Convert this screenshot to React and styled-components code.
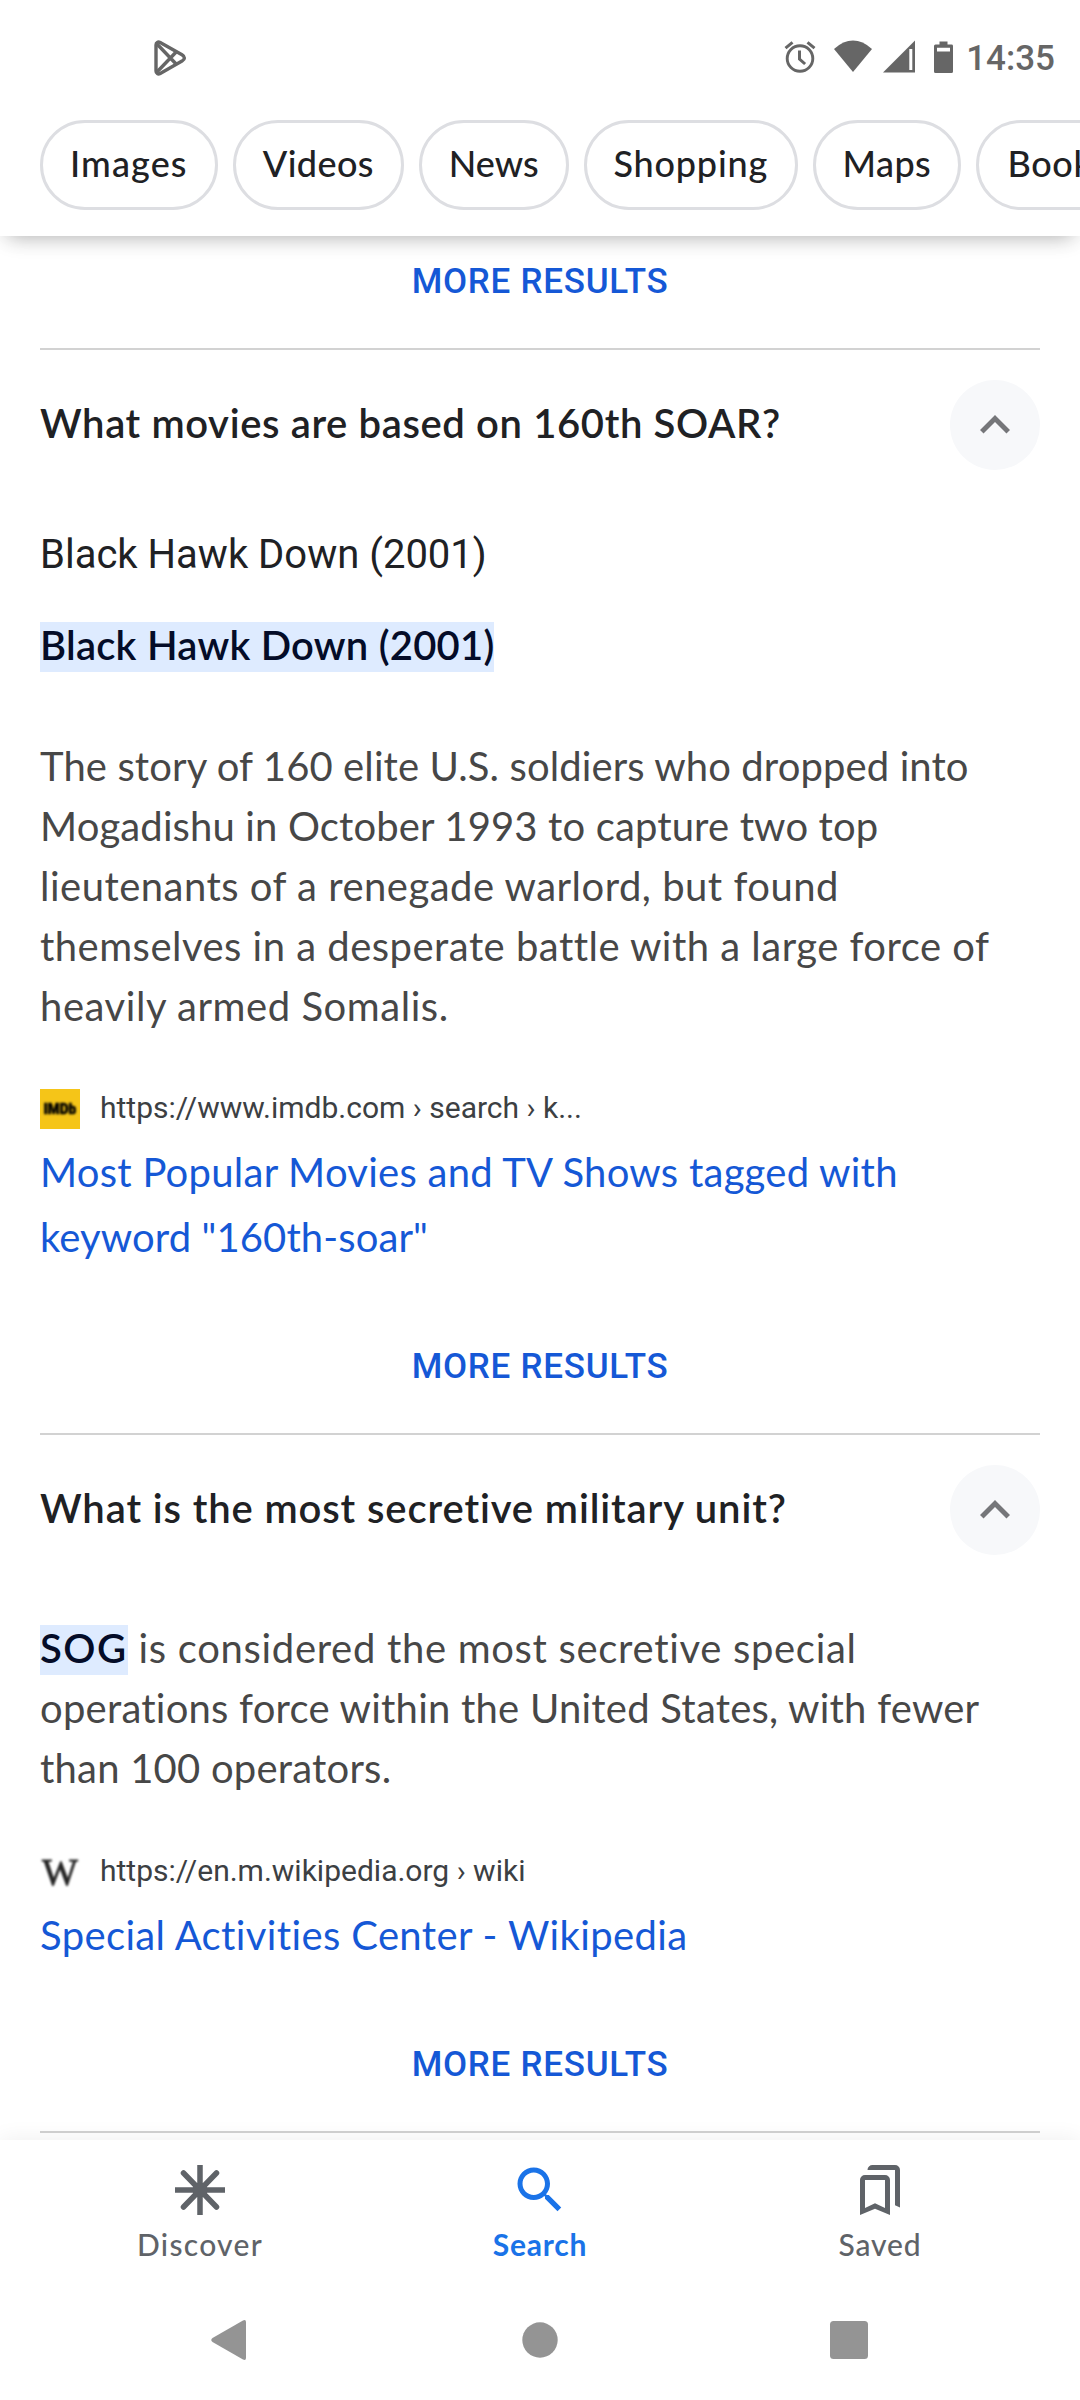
import React from "react";
import styled, { createGlobalStyle } from "styled-components";

const sans = '"Lato", "Liberation Sans", sans-serif';
const roboto = '"Roboto", "Liberation Sans", sans-serif';
const link = "#1558d6";

const GlobalStyle = createGlobalStyle`
  * { box-sizing: border-box; }
  body { margin: 0; background: #fff; }
`;

const Screen = styled.div`
  display: flex;
  flex-direction: column;
  width: 1080px;
  height: 2400px;
  overflow: hidden;
  background: #fff;
  color: #202124;
  font-family: ${sans};
`;

const Header = styled.header`
  position: relative;
  z-index: 1;
  flex: none;
  height: 236px;
  background: #fff;
  box-shadow: 0 8px 20px -8px rgba(0, 0, 0, 0.32), 0 4px 24px rgba(0, 0, 0, 0.03);
`;

const StatusBar = styled.div`
  display: flex;
  align-items: center;
  height: 116px;
  padding: 0 25px 0 152px;
  color: #666;
`;

const StatusIcon = styled.svg`
  flex: none;
  display: block;
  width: ${(p) => p.$width}px;
  height: 36px;
  margin-left: ${(p) => p.$gap || 0}px;
`;

const Spacer = styled.div`
  flex: 1;
`;

const Clock = styled.span`
  margin-left: 13.5px;
  padding-top: 2px;
  font: 500 35px/40px ${roboto};
`;

const Chips = styled.nav`
  display: flex;
  gap: 15.4px;
  padding: 4px 0 0 40px;
  overflow: hidden;
`;

const Chip = styled.div`
  flex: none;
  display: flex;
  justify-content: center;
  width: ${(p) => p.$width}px;
  height: 90px;
  border: 3px solid #dddee2;
  border-radius: 45px;
  font-size: 36px;
  font-weight: 500;
  line-height: 80px;
  letter-spacing: ${(p) => p.$track}px;
`;

const Content = styled.main`
  flex: 1;
  min-height: 0;
  overflow: hidden;
  padding: 0 40px;
`;

const MoreResults = styled.div`
  height: 90px;
  margin-bottom: 22px;
  text-align: center;
  color: ${link};
  font: 500 35px/92px ${roboto};
  letter-spacing: 0.72px;
`;

const Question = styled.section`
  padding-top: 30px;
  border-top: 2px solid #d2d2d2;
`;

const QuestionHead = styled.div`
  display: flex;
  justify-content: space-between;
  align-items: center;
  height: 90px;
`;

const Title = styled.h2`
  margin: 0;
  padding-bottom: 4px;
  font-size: 40px;
  font-weight: 600;
  line-height: 60px;
  letter-spacing: ${(p) => p.$track}px;
`;

const Toggle = styled.div`
  display: grid;
  place-items: center;
  width: 90px;
  height: 90px;
  border-radius: 50%;
  background: #f7f8fa;
  color: #757679;
`;

const Icon = styled.svg`
  display: block;
  width: 60px;
  height: 60px;
  fill: currentColor;
`;

const Subject = styled.div`
  margin-top: 55px;
  font: 400 40px/60px ${roboto};
`;

const Answer = styled.div`
  margin-top: 30px;
  font-size: 40px;
  line-height: 60px;
`;

const Mark = styled.span`
  padding-bottom: 3px;
  background: linear-gradient(#deebff, #deebff) 0 1px no-repeat;
  color: #040c28;
  font-weight: 600;
  letter-spacing: ${(p) => p.$track}px;
`;

const Snippet = styled.p`
  margin: ${(p) => p.$gap}px 0 0;
  color: #474747;
  font-size: 40px;
  line-height: 60px;
`;

const Line = styled.span`
  display: block;
  white-space: pre;
  letter-spacing: ${(p) => p.$track}px;
`;

const Source = styled.div`
  display: flex;
  align-items: center;
  gap: 20px;
  height: 40px;
  margin-top: ${(p) => p.$gap}px;
`;

const Favicon = styled.div`
  display: grid;
  place-items: center;
  width: 40px;
  height: 40px;
`;

const ImdbIcon = styled(Favicon)`
  background: #f5c518;
  color: #000;
`;

const ImdbText = styled.span`
  font: 900 15px/20px ${roboto};
  transform: scaleX(0.9);
  -webkit-text-stroke: 0.7px #000;
  filter: blur(0.9px);
`;

const WikiText = styled.span`
  color: #222;
  font: 400 38px/40px "Liberation Serif", serif;
  -webkit-text-stroke: 0.9px #333;
  filter: blur(0.8px);
`;

const Url = styled.span`
  padding-bottom: 3px;
  color: #3c4043;
  font: 400 30px/36px ${roboto};
`;

const ResultLink = styled.div`
  margin: 11px 0 51px;
  color: ${link};
  font-size: 40px;
  line-height: 65px;
`;

const BottomBar = styled.footer`
  position: relative;
  z-index: 1;
  flex: none;
  height: 260px;
  background: #fff;
  box-shadow: 0 0 22px rgba(0, 0, 0, 0.07);
`;

const Tabs = styled.div`
  display: grid;
  grid-template-columns: repeat(3, 340px);
  justify-content: center;
  height: 140px;
  padding-top: 20px;
`;

const Tab = styled.div`
  display: flex;
  flex-direction: column;
  align-items: center;
  color: ${(p) => (p.$active ? "#1a73e8" : "#5f6368")};
  font-size: 30px;
  font-weight: ${(p) => (p.$active ? 700 : 500)};
  line-height: 40px;
  letter-spacing: ${(p) => p.$track}px;
`;

const TabLabel = styled.span`
  margin-top: 4px;
`;

const SystemNav = styled.div`
  display: grid;
  grid-template-columns: repeat(3, 309px);
  justify-content: center;
  justify-items: center;
  align-items: center;
  height: 120px;
  color: #949494;
`;

const chips = [
  ["Images", 177.6, 1.1],
  ["Videos", 170.6, 0.4],
  ["News", 149.6, 0.1],
  ["Shopping", 213.6, 0.8],
  ["Maps", 147.8, 0.4],
  ["Books", 164, 0.6],
];

const ExpandToggle = () => (
  <Toggle>
    <Icon viewBox="0 0 24 24">
      <path d="M12 8l-6 6 1.41 1.41L12 10.83l4.59 4.58L18 14z" />
    </Icon>
  </Toggle>
);

export default function App() {
  return (
    <Screen>
      <GlobalStyle />
      <Header>
        <StatusBar>
          <StatusIcon $width={36} viewBox="152 40.5 36 36" fill="none" stroke="currentColor" strokeWidth="3.4">
            <path d="M156 45.5v26c0 2.6 2 3.6 4.2 2.4L182 61.6c3.2-1.9 3.2-4.4 0-6.3L160.2 43.100c-2.2-1.2-4.2-.2-4.2 2.4z" />
            <path d="M157 44.5l19.6 20.5M157 72.5l19.6-20.5" />
          </StatusIcon>
          <Spacer />
          <StatusIcon $width={32} viewBox="784.5 40.5 32 36" fill="none" stroke="currentColor">
            <circle cx="800.5" cy="59" r="12.8" strokeWidth="2.9" />
            <path d="M786 48.6l7-5.8M815 48.6l-7-5.8M800 51v8.5l5.6 5" strokeWidth="3" />
          </StatusIcon>
          <StatusIcon $width={38} $gap={17.5} viewBox="834 40.5 38 36" fill="currentColor">
            <path d="M834 49.5Q853 32.7 872 49.5L853 72.5Z" />
          </StatusIcon>
          <StatusIcon $width={32} $gap={11} viewBox="883 40.5 32 36" fill="currentColor" fillRule="evenodd">
            <path d="M883 73L915 41V73ZM909.3 49.5V70.5H912.3V49.5Z" />
          </StatusIcon>
          <StatusIcon $width={19} $gap={19} viewBox="934 40.5 19 36" fill="currentColor" fillRule="evenodd">
            <path d="M939.5 42h8v3h4a1.5 1.5 0 0 1 1.5 1.5v25.5a1.5 1.5 0 0 1-1.5 1.5h-16a1.5 1.5 0 0 1-1.5-1.5v-25.5a1.5 1.5 0 0 1 1.5-1.5h4zM937 48.3v3.7h13v-3.7z" />
          </StatusIcon>
          <Clock>14:35</Clock>
        </StatusBar>
        <Chips>
          {chips.map(([label, width, track]) => (
            <Chip key={label} $width={width} $track={track}>
              {label}
            </Chip>
          ))}
        </Chips>
      </Header>

      <Content>
        <MoreResults>MORE RESULTS</MoreResults>

        <Question>
          <QuestionHead>
            <Title $track={0.62}>What movies are based on 160th SOAR?</Title>
            <ExpandToggle />
          </QuestionHead>
          <Subject>Black Hawk Down (2001)</Subject>
          <Answer>
            <Mark $track={0.22}>Black Hawk Down (2001)</Mark>
          </Answer>
          <Snippet $gap={61}>
            <Line $track={0.11}>The story of 160 elite U.S. soldiers who dropped into</Line>
            <Line $track={0.14}>Mogadishu in October 1993 to capture two top</Line>
            <Line $track={0.49}>lieutenants of a renegade warlord, but found</Line>
            <Line $track={0.48}>themselves in a desperate battle with a large force of</Line>
            <Line $track={0.56}>heavily armed Somalis.</Line>
          </Snippet>
          <Source $gap={53}>
            <ImdbIcon>
              <ImdbText>IMDb</ImdbText>
            </ImdbIcon>
            <Url>https://www.imdb.com › search › k...</Url>
          </Source>
          <ResultLink>
            <Line $track={0.26}>Most Popular Movies and TV Shows tagged with</Line>
            <Line $track={0.11}>keyword "160th-soar"</Line>
          </ResultLink>
          <MoreResults>MORE RESULTS</MoreResults>
        </Question>

        <Question>
          <QuestionHead>
            <Title $track={0.88}>What is the most secretive military unit?</Title>
            <ExpandToggle />
          </QuestionHead>
          <Snippet $gap={63}>
            <Line $track={0.68}>
              <Mark $track={1.5}>SOG</Mark> is considered the most secretive special
            </Line>
            <Line $track={0.23}>operations force within the United States, with fewer</Line>
            <Line $track={0.22}>than 100 operators.</Line>
          </Snippet>
          <Source $gap={54}>
            <Favicon>
              <WikiText>W</WikiText>
            </Favicon>
            <Url>https://en.m.wikipedia.org › wiki</Url>
          </Source>
          <ResultLink>
            <Line $track={0.37}>Special Activities Center - Wikipedia</Line>
          </ResultLink>
          <MoreResults>MORE RESULTS</MoreResults>
        </Question>
        <Question />
      </Content>

      <BottomBar>
        <Tabs>
          <Tab $track={1.3}>
            <Icon viewBox="0 0 24 24">
              <path d="M12 2v20M2 12h20" stroke="currentColor" strokeWidth="2.2" />
              <path d="M5.4 5.2l13.2 13.6M18.6 5.2L5.4 18.8" stroke="currentColor" strokeWidth="2.2" strokeLinecap="round" />
              <circle cx="12" cy="12" r="3" />
            </Icon>
            <TabLabel>Discover</TabLabel>
          </Tab>
          <Tab $active $track={0.8}>
            <Icon viewBox="0 0 24 24">
              <path d="M15.5 14h-.79l-.28-.27C15.41 12.59 16 11.11 16 9.5 16 5.91 13.09 3 9.5 3S3 5.91 3 9.5 5.91 16 9.5 16c1.61 0 3.09-.59 4.23-1.57l.27.28v.79l5 4.99L20.49 19l-4.99-5zm-6 0C7.01 14 5 11.99 5 9.5S7.01 5 9.5 5 14 7.01 14 9.5 11.99 14 9.5 14z" />
            </Icon>
            <TabLabel>Search</TabLabel>
          </Tab>
          <Tab $track={0.9}>
            <Icon viewBox="0 0 24 24">
              <path fillRule="evenodd" d="M6 6h8a2 2 0 0 1 2 2v14l-6-2.5L4 22V8a2 2 0 0 1 2-2zM6 8v11.2l4-1.9 4 1.9V8z" />
              <path d="M7 4a2 2 0 0 1 2-2h9a2 2 0 0 1 2 2v15l-2-.9V4z" />
            </Icon>
            <TabLabel>Saved</TabLabel>
          </Tab>
        </Tabs>
        <SystemNav>
          <Icon viewBox="0 0 60 60">
            <path d="M42 10.4L11.5 28q-2.5 2 0 4L42 49.6q3 1.2 3-1.6V12q0-2.8-3-1.6z" />
          </Icon>
          <Icon viewBox="0 0 60 60">
            <circle cx="30" cy="30" r="17.7" />
          </Icon>
          <Icon viewBox="0 0 60 60">
            <rect x="11" y="11" width="38" height="38" rx="3.5" />
          </Icon>
        </SystemNav>
      </BottomBar>
    </Screen>
  );
}
